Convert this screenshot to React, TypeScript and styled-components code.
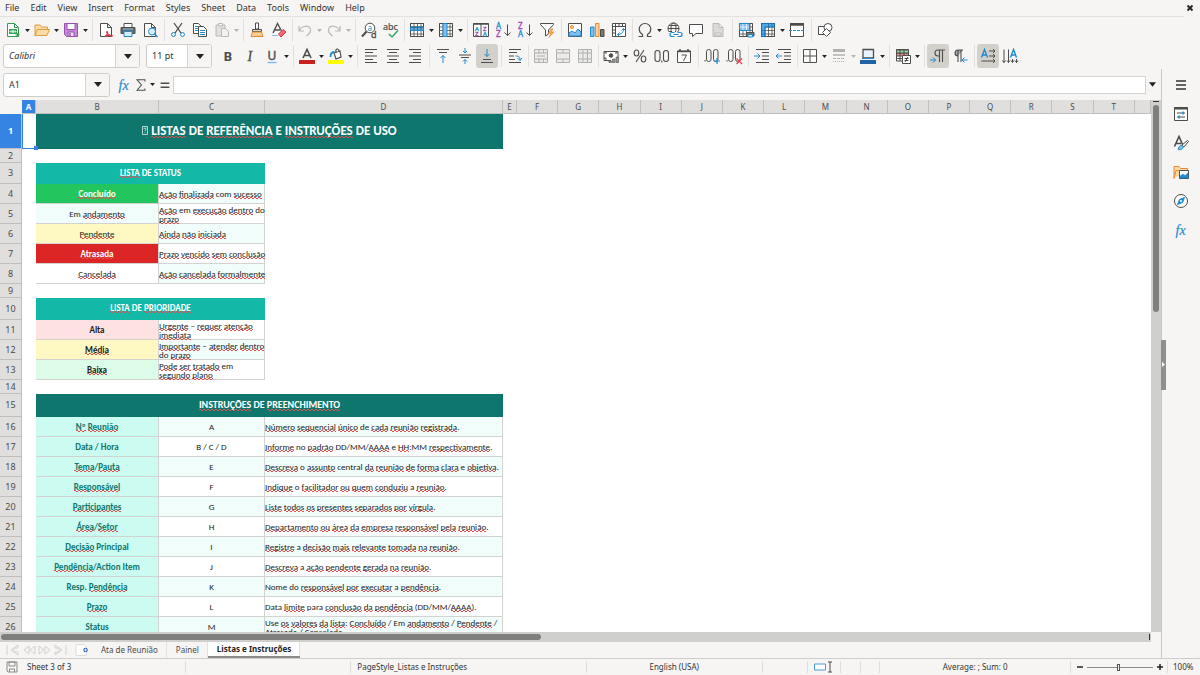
import React from "react";
import styled, { createGlobalStyle, css } from "styled-components";

const ink = "#4d4d4b";
const blue = "#1e8bcd";
const sky = "#83beec";
const line = "#d5d3d1";

const GlobalStyle = createGlobalStyle`
  *, *::before, *::after { box-sizing: border-box; }
  html, body, #root { height: 100%; }
  body { margin: 0; background: #f6f5f4; }
  button, input { font: inherit; color: inherit; }
`;

const Window = styled.div`
  display: flex;
  flex-direction: column;
  height: 100vh;
  overflow: hidden;
  background: #f6f5f4;
  color: #343432;
  font-family: "Noto Sans", sans-serif;
  font-size: 9px;
  line-height: 12px;
`;

const MenuBar = styled.nav`
  display: flex;
  flex: none;
  align-items: center;
  gap: 1px;
  height: 17px;
  margin-right: 16px;
  border-bottom: 1px solid #e3e1df;
`;

const MenuItem = styled.button`
  border: 0;
  background: none;
  padding: 0 5px;
`;

const CloseButton = styled.button`
  display: flex;
  margin-left: auto;
  margin-right: -10px;
  padding: 0;
  border: 0;
  background: none;
`;

const ToolRow = styled.div`
  display: flex;
  flex: none;
  align-items: center;
  height: 26px;
  padding-left: 2px;
`;

const ToolButton = styled.button<{ $active?: boolean; $faded?: boolean }>`
  display: flex;
  flex: none;
  align-items: center;
  justify-content: center;
  width: 22px;
  height: 24px;
  padding: 0;
  border: 0;
  border-radius: 3px;
  background: ${(p) => (p.$active ? "#d3d0cc" : "none")};
  opacity: ${(p) => (p.$faded ? 0.35 : 1)};
`;

const ArrowButton = styled.button<{ $faded?: boolean }>`
  display: flex;
  flex: none;
  align-items: center;
  justify-content: center;
  width: 7px;
  height: 24px;
  padding: 0;
  border: 0;
  background: none;
  opacity: ${(p) => (p.$faded ? 0.3 : 1)};
`;

const Separator = styled.span<{ $narrow?: boolean }>`
  flex: none;
  width: ${(p) => (p.$narrow ? 4 : 6)}px;
  height: 22px;
  background: linear-gradient(#e2e0de, #e2e0de) center / 1px 100% no-repeat;
`;

const Combo = styled.div<{ $width: number }>`
  display: flex;
  flex: none;
  width: ${(p) => p.$width}px;
  height: 24px;
  margin-left: 1px;
  margin-right: 5px;
  border: 1px solid #cfccc9;
  border-radius: 3px;
  background: #fff;
  overflow: hidden;
`;

const ComboInput = styled.input<{ $italic?: boolean }>`
  flex: 1;
  min-width: 0;
  padding: 0 5px;
  border: 0;
  outline: 0;
  background: none;
  font-style: ${(p) => (p.$italic ? "italic" : "normal")};
`;

const ComboButton = styled.button`
  display: flex;
  align-items: center;
  justify-content: center;
  width: 24px;
  padding: 0;
  border: 0;
  border-left: 1px solid #d5d2cf;
  background: #f6f5f4;
`;

const Body = styled.div`
  display: flex;
  flex: 1;
  min-height: 0;
`;

const Workspace = styled.main`
  display: flex;
  flex: 1;
  flex-direction: column;
  min-width: 0;
`;

const FormulaBar = styled.div`
  display: flex;
  flex: none;
  align-items: center;
  height: 31px;
  padding: 0 5px 0 2px;
`;

const FormulaButton = styled(ToolButton)`
  width: 17px;
`;

const FormulaInput = styled.input`
  flex: 1;
  min-width: 0;
  height: 18px;
  margin-right: 3px;
  padding: 0 4px;
  border: 1px solid #d5d3d1;
  outline: 0;
  background: #fff;
`;

const SheetArea = styled.div`
  display: flex;
  flex: 1;
  min-height: 0;
`;

const GridView = styled.div`
  flex: 1;
  min-width: 0;
  overflow: hidden;
  background: #fff;
`;

const Grid = styled.table`
  width: 100%;
  table-layout: fixed;
  border-collapse: separate;
  border-spacing: 0;
`;

const Col = styled.col<{ $width?: number }>`
  width: ${(p) => (p.$width ? `${p.$width}px` : "auto")};
`;

const Row = styled.tr<{ $height: number }>`
  height: ${(p) => p.$height}px;
`;

const Heading = styled.th<{ $selected?: boolean }>`
  padding: 0;
  border-right: 1px solid #c0bfbd;
  border-bottom: 1px solid #c0bfbd;
  background: ${(p) => (p.$selected ? "#3584e4" : "#e1dfde")};
  color: ${(p) => (p.$selected ? "#fff" : "#4b4b49")};
  font-size: 9px;
  line-height: 12px;
  font-weight: ${(p) => (p.$selected ? 700 : 400)};
  text-align: center;
`;

const ColumnHeading = styled(Heading)`
  font-size: 8px;
`;

const Corner = styled.td`
  padding: 0;
  background: #f6f5f4;
`;

const Blank = styled.td`
  padding: 0;
`;

const CursorCell = styled.td`
  position: relative;
  padding: 0;
  border: 1px solid #3584e4;
  border-right: 0;
  border-top: 0;

  &::after {
    content: "";
    position: absolute;
    right: -2px;
    bottom: -2px;
    z-index: 1;
    width: 4px;
    height: 4px;
    background: #3584e4;
  }
`;

const Banner = styled.td<{ $fill: string; $size: number }>`
  padding: 0 0 2px;
  background: ${(p) => p.$fill};
  color: #fff;
  font-family: Carlito, Lato, sans-serif;
  font-size: ${(p) => p.$size}px;
  font-weight: 700;
  line-height: 14px;
  text-align: center;
`;

const Cell = styled.td<{ $fill?: string; $color?: string; $bold?: boolean; $left?: boolean }>`
  padding: 0;
  border-right: 1px solid ${line};
  border-bottom: 1px solid ${line};
  background: ${(p) => p.$fill ?? "#fff"};
  color: ${(p) => p.$color ?? "#1c1c1c"};
  font-family: Carlito, Lato, sans-serif;
  font-size: 9px;
  line-height: 9px;
  font-weight: ${(p) => (p.$bold ? 700 : 400)};
  text-align: ${(p) => (p.$left ? "left" : "center")};
  white-space: pre;
`;

/* Two offset rows of dashes under the baseline form the small spelling wave. */
const Misspelt = styled.span`
  background:
    linear-gradient(90deg, #e0504c 50%, transparent 50%) 0 calc(100% - 1px) / 4px 1px repeat-x,
    linear-gradient(90deg, transparent 50%, #e0504c 50%) 0 100% / 4px 1px repeat-x;
`;

const scrollThumb = css`
  background: #7f807e;
  border-radius: 3px;
`;

const VerticalScroll = styled.div`
  flex: none;
  width: 10px;
  padding: 1px 2px;
  background: #cfcfce;
`;

const VerticalThumb = styled.div`
  ${scrollThumb}
  height: 39%;
  margin-top: 3px;
  width: 6px;
`;

const EndMark = styled.div<{ $upright?: boolean }>`
  width: ${(p) => (p.$upright ? 1 : 6)}px;
  height: ${(p) => (p.$upright ? 6 : 1)}px;
  background: #333;
`;

const HorizontalScroll = styled.div`
  display: flex;
  flex: none;
  align-items: center;
  justify-content: space-between;
  height: 10px;
  margin-right: 10px;
  padding: 0 1px;
  background: #cfcfce;
`;

const HorizontalThumb = styled.div`
  ${scrollThumb}
  width: 47%;
  height: 6px;
`;

const TabBar = styled.div`
  display: flex;
  flex: none;
  height: 16px;
  padding-left: 5px;
  font-size: 8px;
`;

const TabNav = styled.div`
  display: flex;
  align-items: center;
  width: 69px;
`;

const TabNavButton = styled.button`
  display: flex;
  padding: 0;
  border: 0;
  background: none;
`;

const AddSheet = styled.button`
  display: flex;
  align-items: center;
  width: 18px;
  padding: 0 2px;
  border: 0;
  background: none;
`;

const Tab = styled.button<{ $active?: boolean }>`
  padding: 0 9px;
  border: 0;
  border-bottom: ${(p) => (p.$active ? "2px solid #8a8a88" : "0")};
  background: ${(p) => (p.$active ? "#fff" : "none")};
  color: ${(p) => (p.$active ? "#222" : "#4b4b49")};
  font-weight: ${(p) => (p.$active ? 700 : 400)};
  box-shadow: inset -1px 0 #e3e1df;
`;

const Sidebar = styled.aside`
  position: relative;
  display: flex;
  flex: none;
  flex-direction: column;
  align-items: center;
  gap: 5px;
  width: 39px;
  padding-top: 4px;
  border-left: 1px solid #c8c6c4;
`;

const Handle = styled.button`
  position: absolute;
  left: -1px;
  top: 46%;
  display: flex;
  align-items: center;
  width: 5px;
  height: 50px;
  padding: 0;
  border: 0;
  background: #8f8f8d;
`;

const StatusBar = styled.footer`
  display: grid;
  flex: none;
  grid-template-columns: 186fr 166fr 236fr 176fr 46fr 31fr 20fr 19fr 191fr 97px 32px;
  align-items: center;
  height: 17px;
  border-top: 1px solid #cfcdcb;
  font-size: 8px;
`;

const StatusItem = styled.div<{ $center?: boolean }>`
  display: flex;
  align-items: center;
  justify-content: ${(p) => (p.$center ? "center" : "flex-start")};
  gap: 9px;
  height: 12px;
  padding: 0 6px;
  border-right: 1px solid #e0dedc;
  white-space: nowrap;

  &:last-child { border-right: 0; padding: 0 5px; }
`;

const Zoom = styled(StatusItem)`
  gap: 3px;
  padding: 0 5px;
`;

const ZoomButton = styled.button`
  display: flex;
  padding: 0;
  border: 0;
  background: none;
`;

const ZoomSlider = styled.input`
  appearance: none;
  width: 66px;
  height: 10px;
  margin: 0;
  background: linear-gradient(#8d8c8a, #8d8c8a) center / 100% 1px no-repeat;

  &::-webkit-slider-thumb {
    appearance: none;
    width: 3px;
    height: 7px;
    border: 1px solid #555;
    background: #f6f5f4;
  }
`;

const Art = styled.svg`
  display: block;
  flex: none;
  overflow: visible;
  fill: none;
  stroke: ${ink};
  stroke-width: 1;
`;

const serif = { fontFamily: '"Liberation Serif", serif' };
const sans = { fontFamily: '"Noto Sans", sans-serif' };

function Caret({ size = 5 }: { size?: number }) {
  return (
    <Art width={size} height={size === 5 ? 3 : 5} viewBox="0 0 8 5" aria-hidden>
      <path d="M0 0h8L4 5z" fill="#222" stroke="none" />
    </Art>
  );
}

const page = <path d="M2.500 1.500h7l4 4v9h-11zM9.500 1.500v4h4" fill="#fff" />;
const gridLines = <path d="M1.500 1.500h13v13h-13zM1.500 5h13M1.500 8.500h13M1.500 12h13M5 1.500v13M8.500 1.500v13M12 1.500v13" strokeWidth=".8" />;

const icons: Record<string, React.ReactNode> = {
  new: (
    <g stroke="#2f9e4f">
      <path d="M2.500 1.500h7l4 4v9h-11z" fill="#fff" />
      <path d="M9.500 1.500v4h4" />
      <path d="M4.500 7.500h7v4h-7z" fill="#6cc287" />
      <path d="M4.500 9.500h7M8 7.500v4" stroke="#fff" strokeWidth=".6" />
      <path d="M10.500 13h4M12.500 11v4" strokeWidth="1.200" />
    </g>
  ),
  open: <path d="M1 13.500V3h5l1.500 2h6v2.500M1 13.500l2.500-6h12l-2.500 6z" fill="#fbdca8" stroke="#e09b3c" />,
  save: (
    <g stroke="#9a4fb0">
      <path d="M1.500 1.500h13v13h-11l-2-2z" fill="#c58bd6" />
      <path d="M4 1.500h8v6H4z" fill="#fff" />
      <path d="M5 10h6v4.500H5z" fill="#f0e0f5" />
      <path d="M7 11v3" strokeWidth="1.500" />
    </g>
  ),
  pdf: <g>{page}<path d="M7 14.500c3-2 3-5 2-5s0 4 6 4.500c-2-1-5-.5-8 .5z" fill="#fff" stroke="#dc3b45" strokeWidth="1.200" /></g>,
  print: (
    <g>
      <path d="M4 5.500v-4h8v4" fill="#fff" />
      <path d="M1 5.500h14v6H1z" fill="#6a6a68" />
      <path d="M3 7h10" stroke={sky} />
      <path d="M4 9.500h8v5H4z" fill="#d8ecfa" stroke={blue} />
    </g>
  ),
  preview: <g>{page}<circle cx="10" cy="9.500" r="3.500" fill="#d8ecfa" stroke={blue} /><path d="M12.500 12l3 3" stroke={blue} strokeWidth="1.500" /></g>,
  cut: <g><path d="M4 1l7 10M12 1L5 11" strokeWidth="1.300" /><circle cx="3.500" cy="12.500" r="2" stroke={blue} /><circle cx="12.500" cy="12.500" r="2" stroke={blue} /></g>,
  copy: <g><path d="M1.500 1.500h5l3 3v7h-8z" fill="#fff" /><path d="M3 4.500h3M3 6.500h4M3 8.500h4" stroke={blue} /><path d="M6.500 4.500h5l3 3v7h-8z" fill="#fff" /><path d="M8 8.500h5M8 10.500h5M8 12.500h5" stroke={blue} /></g>,
  paste: <g><path d="M2 3h9v11H2z" fill="#bbb" /><path d="M4.500 1.500h4V4h-4z" fill="#eee" /><path d="M7.500 6.500h4l3 3v5h-7z" fill="#eee" /></g>,
  brush: <g><path d="M6.500 1h3v6h-3z" fill="#fff" /><path d="M3.500 7.500h9v2h-9z" fill="#ddd" /><path d="M3.500 10h9l1.500 4.500H2z" fill="#fbd09a" stroke="#e38a32" /><path d="M5 14.500h8" stroke="#e38a32" /></g>,
  clear: <g><path d="M2 11L6.500 1.500 11 10M4 8h5" strokeWidth="1.400" /><path d="M1 13.500h6" stroke={sky} /><path d="M7.500 12l4.500-4.500 3 2.500-5 5z" fill="#ef6c74" stroke="#cf3a45" /></g>,
  undo: <path d="M2 4v5h5M2.500 8.500c2-5 10-6 11-1 .5 3-2 5-4 6.500" strokeWidth="1.200" />,
  redo: <path d="M14 4v5H9M13.500 8.500c-2-5-10-6-11-1-.5 3 2 5 4 6.500" strokeWidth="1.200" />,
  find: <g><circle cx="9" cy="6" r="4.800" fill="#fff" /><path d="M5.500 9.500L1 14.500" strokeWidth="2" /><text x="6.500" y="9" fontSize="8" fill={blue} stroke="none" style={sans}>a</text><text x="10" y="15.500" fontSize="9" fill={ink} stroke={ink} strokeWidth=".3" style={sans}>d</text></g>,
  spell: <g><text x="0" y="8" fontSize="9" fill={ink} stroke={ink} strokeWidth=".2" style={sans}>abc</text><path d="M6 12l3 3 6-6.500" stroke="#2fa866" strokeWidth="1.500" /></g>,
  rows: <g><path d="M1.500 1.500h13v13h-13z" fill="#fff" /><path d="M1.500 5h13v3.500h-13z" fill="#5aaee6" />{gridLines}<path d="M1.500 5h13v3.500h-13z" stroke={blue} /></g>,
  cols: <g><path d="M1.500 1.500h13v13h-13z" fill="#fff" />{gridLines}<path d="M5 1.500h4v13H5z" fill={sky} stroke={blue} /></g>,
  sort: <g><path d="M.5 1.500h15v13H.5zM8 1.500v13" fill="#fff" /><path d="M.5 2h15" strokeWidth="1.500" /><text x="2" y="8.500" fontSize="6" fill={blue} stroke={blue} strokeWidth=".3" style={sans}>A</text><text x="2" y="14" fontSize="6" fill="#a345b8" stroke="#a345b8" strokeWidth=".3" style={sans}>Z</text><text x="10" y="8.500" fontSize="6" fill="#a345b8" stroke="#a345b8" strokeWidth=".3" style={sans}>Z</text><text x="10" y="14" fontSize="6" fill={blue} stroke={blue} strokeWidth=".3" style={sans}>A</text></g>,
  az: <g><text x="1" y="7" fontSize="8" fill={blue} stroke={blue} strokeWidth=".3" style={sans}>A</text><text x="1" y="15" fontSize="8" fill="#a345b8" stroke="#a345b8" strokeWidth=".3" style={sans}>Z</text><path d="M12.500 2.500v11M9.500 10.500l3 3 3-3" /></g>,
  za: <g><text x="1" y="7" fontSize="8" fill="#a345b8" stroke="#a345b8" strokeWidth=".3" style={sans}>Z</text><text x="1" y="15" fontSize="8" fill={blue} stroke={blue} strokeWidth=".3" style={sans}>A</text><path d="M12.500 2.500v11M9.500 10.500l3 3 3-3" /></g>,
  filter: <g><path d="M1.500 1.500h13v1L9.500 8v4l-3 2V8l-5-5.500z" fill="#fff" /><path d="M12 7l-3 4.500h3l-2 4 5-5.500h-3l2-3z" fill="#f5a94d" stroke="#e38a32" strokeWidth=".6" /></g>,
  image: <g><path d="M1.500 1.500h13v13h-13z" fill="#fff" /><circle cx="5" cy="5" r="1.500" fill="#fbd09a" stroke="#e38a32" /><path d="M2 14v-3l3-2 3 2 3-4 3 3v4z" fill={sky} stroke={blue} /></g>,
  chart: <g><path d="M1.500 5h3.500v9.500H1.500z" fill={sky} stroke={blue} /><path d="M6.500 1.500H10v13H6.500z" fill="#fbd09a" stroke="#e38a32" /><path d="M11.500 7.500H15v7h-3.500z" fill="#777" /></g>,
  pivot: <g><path d="M1.500 1.500h13v13h-13zM1.500 4.500h13M4.500 1.500v13M8 1.500v3M11.500 1.500v3M1.500 8h3M1.500 11h3" fill="#fff" /><path d="M6.500 12.500c4 0 6-2 6-5.500M10.500 8.500L12.500 6.500l2 2M8.500 10.500l-2 2 2 2" stroke={blue} /></g>,
  omega: <path d="M1.500 14.500h4v-2C3 11 2.200 9 2.200 7a5.800 5.500 0 0 1 11.600 0c0 2-.8 4-3.300 5.500v2h4" strokeWidth="1.200" />,
  link: <g><circle cx="7.500" cy="6.500" r="5.500" /><ellipse cx="7.500" cy="6.500" rx="2.500" ry="5.500" /><path d="M2 6.500h11M3 3.500h9M3 9.500h3" /><rect x="3" y="10" width="13" height="5.500" fill="#f6f5f4" stroke="none" /><path d="M8.500 10.500H6a2 2 0 0 0 0 4h2.500M11.500 10.500H14a2 2 0 0 1 0 4h-2.500M7.500 12.500h5" stroke={blue} strokeWidth="1.200" /></g>,
  comment: <path d="M1.500 2.500h13v9H8l-3.500 3v-3h-3z" fill="#fff" />,
  header: <g opacity=".35"><path d="M3 1.500h6l4 4v9H3zM9 1.500v4h4" fill="#aaa" /><path d="M5 11h6v2H5z" fill="#fff" /></g>,
  printarea: <g><path d="M1.500 1.500h13v13h-13z" fill="#fff" />{gridLines}<path d="M1.500 1.500h10v7h-10z" fill={sky} stroke={blue} /><path d="M2 5h9M5 2v6M8.500 2v6" stroke="#fff" strokeWidth=".7" /><path d="M8.500 10.500H16v3.500H8.500z" fill="#777" /><path d="M10 12.500h4.500v2.500H10z" fill="#d8ecfa" stroke={blue} /></g>,
  freeze: <g><path d="M1.500 1.500h13v13h-13z" fill="#fff" />{gridLines}<path d="M1.500 1.500h13V5H5v9.500H1.500z" fill="#4fa6e0" stroke="#1c6fb0" /><path d="M8.500 2v3M12 2v3M2 8.500h3M2 12h3" stroke="#1c6fb0" strokeWidth=".8" /></g>,
  split: <g><path d="M1.500 1.500h13v13h-13z" fill="#fff" /><path d="M1 2.500h14" strokeWidth="2.500" /><path d="M0 8.500h16" stroke={blue} strokeDasharray="3 1" /></g>,
  shapes: <g><path d="M1.500 4.500h7v8h-7z" fill="#fff" /><circle cx="11" cy="5.500" r="4" fill="#fff" /><path d="M9.500 6.500l4 4-4 4-4-4z" fill="#fff" /></g>,
  bold: <text x="3.500" y="13" fontSize="13" fontWeight="700" fill={ink} stroke="none" style={sans}>B</text>,
  italic: <text x="5.500" y="13" fontSize="14" fontStyle="italic" fill={ink} stroke={ink} strokeWidth=".3" style={serif}>I</text>,
  underline: <g><text x="3.500" y="12" fontSize="12" fill={ink} stroke={ink} strokeWidth=".4" style={sans}>U</text><path d="M3.500 14.500h9" stroke={sky} strokeWidth="1.500" /></g>,
  fontcolor: <g><path d="M4 10L8 1.500l4 8.500M5.500 7.500h5" strokeWidth="1.600" /><path d="M0 14h16" stroke="#c9211e" strokeWidth="4" /></g>,
  highlight: <g><path d="M6 5l6-2 1 6-5 2zM8 4c-1-4 3-4 3 0" fill="#fff" strokeWidth="1.200" /><path d="M2.500 9c0-4 2-5 4-5" stroke={blue} strokeWidth="1.800" /><path d="M0 14h16" stroke="#ffff00" strokeWidth="4" /></g>,
  left: <path d="M2 1.500h12M2 4.500h8M2 8h12M2 11.500h8M2 14.500h12" />,
  center: <path d="M2 1.500h12M4 4.500h8M2 8h12M4 11.500h8M2 14.500h12" />,
  right: <path d="M2 1.500h12M6 4.500h8M2 8h12M6 11.500h8M2 14.500h12" />,
  vtop: <g><path d="M2 1.500h12M4 4.500h8" /><path d="M8 15V7.500M5.500 10L8 7.500 10.500 10" stroke={blue} /></g>,
  vmiddle: <g><path d="M2 7h12M4 9.500h8" /><path d="M8 0v5M6 3l2 2 2-2M8 16v-4.500M6 13.500l2-2 2 2" stroke={blue} /></g>,
  vbottom: <g><path d="M2 14.500h12M4 11.500h8" /><path d="M8 1v7.500M5.500 6L8 8.500 10.500 6" stroke={blue} /></g>,
  wrap: <g><path d="M2 1.500h12M2 4.500h8M2 8h5M2 11.500h6M2 14.500h12" /><path d="M8.500 8c4 0 4.500 1 4.500 4.500M10.500 10l2.500 2.500 2-2.500" stroke={blue} /></g>,
  merge: <g opacity=".4"><path d="M1.500 1.500h13v13h-13zM1.500 5h13M1.500 11h13M6 1.500v3.500M10.500 1.500v3.500M6 11v3.500M10.500 11v3.500" fill="#ddd" /><path d="M4 8h8" /></g>,
  mergecenter: <g opacity=".4"><path d="M1.500 1.500h13v13h-13zM1.500 5h13M1.500 11h13M8 1.500v3.500M8 11v3.500" fill="#ddd" /></g>,
  unmerge: <g opacity=".4"><path d="M1.500 1.500h13v13h-13zM1.500 5h13M1.500 11h13M6 1.500v13M10.500 1.500v13" fill="#ddd" /></g>,
  currency: <g><path d="M8 12.500H1v-9h14v6" fill="#fff" /><path d="M1 4h2v2M15 4h-2v2M3 12v-2H1" /><circle cx="8" cy="7.500" r="1.800" fill={ink} /><path d="M13 9h2.500v5.500H13zM9.500 11H12v3.500H9.500zM6 13h2.500v1.500H6z" fill="#999" strokeWidth=".6" /></g>,
  percent: <g strokeWidth="1.100"><ellipse cx="4.500" cy="5" rx="2.300" ry="3" /><ellipse cx="11.500" cy="11" rx="2.300" ry="3" /><path d="M12 2L4 14" /></g>,
  number: <g strokeWidth="1.100"><rect x="1" y="2.500" width="5" height="11" rx="2.500" /><rect x="9.500" y="2.500" width="5" height="11" rx="2.500" /><path d="M7.800 12.500v2" /></g>,
  date: <g><path d="M1.500 3h13v11.500h-13z" fill="#fff" /><path d="M1.500 3.500h13" strokeWidth="1.500" /><path d="M4 1v3M12 1v3" strokeWidth="1.500" /><path d="M5.500 7h5l-3 6" /></g>,
  adddecimal: <g><path d="M1 12v1.500" /><rect x="2.500" y="1.500" width="4.500" height="12" rx="2.200" /><rect x="9.500" y="1.500" width="4.500" height="12" rx="2.200" /><path d="M10 13h6M13 10v6" stroke={blue} strokeWidth="1.200" /></g>,
  deldecimal: <g><path d="M1 12v1.500" /><rect x="2.500" y="1.500" width="4.500" height="12" rx="2.200" /><rect x="9.500" y="1.500" width="4.500" height="12" rx="2.200" /><path d="M10.500 10.500L16 16M16 10.500L10.500 16" stroke="#e0444a" strokeWidth="1.200" /></g>,
  indent: <g><path d="M2 1.500h13M8 4.500h7M8 8h7M8 11.500h7M2 14.500h13" /><path d="M0 8h6M3.500 5.500L6 8l-2.500 2.500" stroke={blue} /></g>,
  outdent: <g><path d="M2 1.500h13M8 4.500h7M8 8h7M8 11.500h7M2 14.500h13" /><path d="M6 8H0M2.500 5.500L0 8l2.500 2.500" stroke={blue} /></g>,
  border: <path d="M1.500 1.500h13v13h-13zM8 1.500v13M1.500 8h13" fill="#fff" />,
  linestyle: <g opacity=".4"><path d="M2 2.500h12" strokeWidth="3" /><path d="M2 7h12" strokeWidth="1.500" /><path d="M2 10.500h12" strokeDasharray="3 1" /><path d="M2 13.500h12" strokeDasharray="1 1" /></g>,
  bordercolor: <g><path d="M3 1.500h10.500v8.500H3z" fill="#e8f3fc" strokeWidth="1.300" /><path d="M2 10.500h12" stroke={blue} /><path d="M0 14h16" stroke="#2363a5" strokeWidth="4" /></g>,
  conditional: <g><path d="M1.500 1.500h12V13h-12z" fill="#fff" /><path d="M1.500 5h12V8h-12z" fill="#ef8a8a" /><path d="M1.500 2h12v3h-12z" fill="#93d3a4" /><path d="M5 1.500V13M9 1.500v6M1.500 10.500h6" /><path d="M7.500 7.500h8v8h-8z" fill="#fff" /><path d="M9.500 10.500h4M9.500 12.500h4M13 9l-3 5" /></g>,
  ltr: <g><path d="M15 2H8c-4 0-4 6 0 6h1M9.500 2v12M12.500 2v12" strokeWidth="1.100" /><path d="M0 12h5.500M3 9.500L5.500 12 3 14.500" stroke={blue} /></g>,
  rtl: <g><path d="M11 2H6C2 2 2 8 6 8z" fill="#aaa" stroke="none" /><path d="M11 2H6C2 2 2 8 6 8M6 2v12M9 2v12" strokeWidth="1.100" /><path d="M15.500 12H10M12.500 9.500L10 12l2.500 2.500" stroke={blue} /></g>,
  horizontal: <g><path d="M1.500 9.500L4.500 1.500l3 8M2.500 7h4" stroke={blue} strokeWidth="1.400" /><path d="M9 3h6M9 8h6M1.500 13h13.500M13 1l2 2-2 2M13 6l2 2-2 2M13 11l2 2-2 2" /></g>,
  vertical: <g><path d="M8.500 9.500l3-8 3 8M9.500 7h4" stroke={blue} strokeWidth="1.400" /><path d="M2 1.500v13M6.500 1.500v13M10.500 11v3.500M14.500 11v3.500M.5 12.500l1.500 2 1.500-2M5 12.500l1.500 2 1.500-2M9 12.500l1.500 2 1.500-2M13 12.500l1.500 2 1.500-2" /></g>,
  fx: <text x="2.500" y="12.500" fontSize="14" fontStyle="italic" fill={blue} stroke={blue} strokeWidth=".2" style={serif}>fx</text>,
  sum: <path d="M12.500 4V2h-9l5 6-5 6h9v-2" strokeWidth="1.200" />,
  equals: <path d="M3 6h10M3 10.500h10" strokeWidth="1.600" />,
  menu: <path d="M3 4h10M3 8h10M3 12h10" stroke="#333" strokeWidth="1.500" />,
  properties: <g><path d="M1.500 1.500h13v13h-13z" fill="#fff" /><path d="M1 2.500h14" strokeWidth="2" /><path d="M4 7h8M4 11h8" /><path d="M10 5.500v3M6 9.500v3" stroke={blue} strokeWidth="1.500" /></g>,
  styles: <g><path d="M1.500 11.500L6 1.500l3.500 8M3 8.500h5" strokeWidth="1.600" /><path d="M9 10l5.500-4.500 1 1L11 12z" fill="#fff" /><path d="M5 14.500c1-4 3-5 5.500-3-1 3-3 3.500-5.500 3z" fill={sky} stroke={blue} /></g>,
  gallery: <g><path d="M1 14.500v-12h5l1.500 2h7v3M1 14.500l2-8h3" fill="#fbdca8" stroke="#e38a32" /><path d="M6.500 6.500h9v8h-9z" fill="#fff" /><path d="M7 14v-2l3-2 2 1.500 3-2.500v5z" fill={blue} stroke={blue} strokeWidth=".5" /></g>,
  navigator: <g><circle cx="8" cy="8" r="6.500" fill="#fff" /><path d="M11.500 4.500L9.500 9.500l-5 2 2-5z" fill={blue} stroke={blue} /><circle cx="8" cy="8" r="1" fill="#fff" stroke="none" /></g>,
};

function Icon({ name, size = 16 }: { name: string; size?: number }) {
  return (
    <Art width={size} height={size} viewBox="0 0 16 16" aria-hidden>
      {icons[name]}
    </Art>
  );
}

type Tool = { icon: string; label: string; arrow?: boolean; active?: boolean; faded?: boolean } | "|" | "·";

const standardTools: Tool[] = [
  { icon: "new", label: "New", arrow: true },
  { icon: "open", label: "Open", arrow: true },
  { icon: "save", label: "Save", arrow: true },
  "|",
  { icon: "pdf", label: "Export as PDF" },
  { icon: "print", label: "Print" },
  { icon: "preview", label: "Print Preview" },
  "|",
  { icon: "cut", label: "Cut" },
  { icon: "copy", label: "Copy" },
  { icon: "paste", label: "Paste", arrow: true, faded: true },
  "|",
  { icon: "brush", label: "Clone Formatting" },
  { icon: "clear", label: "Clear Formatting" },
  "·",
  { icon: "undo", label: "Undo", arrow: true, faded: true },
  { icon: "redo", label: "Redo", arrow: true, faded: true },
  "|",
  { icon: "find", label: "Find and Replace" },
  { icon: "spell", label: "Spelling" },
  "·",
  { icon: "rows", label: "Row", arrow: true },
  { icon: "cols", label: "Column", arrow: true },
  "|",
  { icon: "sort", label: "Sort" },
  { icon: "az", label: "Sort Ascending" },
  { icon: "za", label: "Sort Descending" },
  { icon: "filter", label: "AutoFilter" },
  "|",
  { icon: "image", label: "Insert Image" },
  { icon: "chart", label: "Insert Chart" },
  { icon: "pivot", label: "Pivot Table" },
  "·",
  { icon: "omega", label: "Special Character", arrow: true },
  { icon: "link", label: "Hyperlink" },
  { icon: "comment", label: "Comment" },
  { icon: "header", label: "Headers and Footers" },
  "|",
  { icon: "printarea", label: "Define Print Area" },
  { icon: "freeze", label: "Freeze", arrow: true },
  { icon: "split", label: "Split Window" },
  "|",
  { icon: "shapes", label: "Draw Functions" },
];

const formatTools: Tool[] = [
  { icon: "bold", label: "Bold" },
  { icon: "italic", label: "Italic" },
  { icon: "underline", label: "Underline", arrow: true },
  "|",
  { icon: "fontcolor", label: "Font Color", arrow: true },
  { icon: "highlight", label: "Background Color", arrow: true },
  "|",
  { icon: "left", label: "Align Left" },
  { icon: "center", label: "Center" },
  { icon: "right", label: "Align Right" },
  "|",
  { icon: "vtop", label: "Align Top" },
  { icon: "vmiddle", label: "Center Vertically" },
  { icon: "vbottom", label: "Align Bottom", active: true },
  "|",
  { icon: "wrap", label: "Wrap Text" },
  "·",
  { icon: "merge", label: "Merge and Center" },
  { icon: "mergecenter", label: "Merge" },
  { icon: "unmerge", label: "Unmerge" },
  "·",
  { icon: "currency", label: "Currency", arrow: true },
  { icon: "percent", label: "Percent" },
  { icon: "number", label: "Number" },
  { icon: "date", label: "Date" },
  "|",
  { icon: "adddecimal", label: "Add Decimal Place" },
  { icon: "deldecimal", label: "Delete Decimal Place" },
  "|",
  { icon: "indent", label: "Increase Indent" },
  { icon: "outdent", label: "Decrease Indent" },
  "·",
  { icon: "border", label: "Borders", arrow: true },
  { icon: "linestyle", label: "Border Style", arrow: true },
  { icon: "bordercolor", label: "Border Color", arrow: true },
  "|",
  { icon: "conditional", label: "Conditional", arrow: true },
  "|",
  { icon: "ltr", label: "Left-To-Right", active: true },
  { icon: "rtl", label: "Right-To-Left" },
  "|",
  { icon: "horizontal", label: "Text Left to Right", active: true },
  { icon: "vertical", label: "Text Top to Bottom" },
];

function Tools({ items }: { items: Tool[] }) {
  return (
    <>
      {items.map((t, i) =>
        typeof t === "string" ? (
          <Separator key={i} $narrow={t === "·"} />
        ) : (
          <React.Fragment key={i}>
            <ToolButton aria-label={t.label} $active={t.active} $faded={t.faded}>
              <Icon name={t.icon} />
            </ToolButton>
            {t.arrow && (
              <ArrowButton aria-label={`${t.label} options`} $faded={t.faded || t.icon === "linestyle"}>
                <Caret />
              </ArrowButton>
            )}
          </React.Fragment>
        ),
      )}
    </>
  );
}

function ComboBox({ label, value, width, italic }: { label: string; value: string; width: number; italic?: boolean }) {
  return (
    <Combo $width={width}>
      <ComboInput aria-label={label} defaultValue={value} $italic={italic} />
      <ComboButton aria-label={`${label} list`}>
        <Caret size={8} />
      </ComboButton>
    </Combo>
  );
}

/* Words in square brackets carry the spell checker's red wave. */
function Spelled({ text }: { text: string }) {
  return (
    <>
      {text.split(/\[(.+?)\]/).map((part, i) => (i % 2 ? <Misspelt key={i}>{part}</Misspelt> : part))}
    </>
  );
}

function MissingGlyph() {
  return (
    <svg width="6" height="9" viewBox="0 0 6 9" fill="none" stroke="#fff" strokeWidth=".7" aria-hidden>
      <path d="M.5.5h5v8h-5zM2 3c0-1.500 2-1.500 2 0 0 1-1 1-1 2.200M3 6.300v.8" />
    </svg>
  );
}

const mint = "#f0fdfa";

type Line = { text: string; fill: string; color?: string; bold?: boolean; note: string; noteFill: string };

const statuses: Line[] = [
  { text: "[Concluído]", fill: "#22c55e", color: "#fff", bold: true, note: "[Ação] [finalizada] com [sucesso]", noteFill: mint },
  { text: "Em [andamento]", fill: mint, note: "[Ação] em [execução] [dentro] do\n[prazo]", noteFill: "#fff" },
  { text: "[Pendente]", fill: "#fef9c3", note: "[Ainda] [não] [iniciada]", noteFill: mint },
  { text: "[Atrasada]", fill: "#dc2626", color: "#fff", bold: true, note: "[Prazo] [vencido] [sem] [conclusão]", noteFill: "#fff" },
  { text: "[Cancelada]", fill: "#fff", note: "[Ação] [cancelada] [formalmente]", noteFill: mint },
];

const priorities: Line[] = [
  { text: "Alta", fill: "#fee2e2", bold: true, note: "[Urgente] – [requer] [atenção]\n[imediata]", noteFill: "#fff" },
  { text: "[Média]", fill: "#fef9c3", bold: true, note: "[Importante] – [atender] [dentro]\ndo [prazo]", noteFill: mint },
  { text: "[Baixa]", fill: "#dcfce7", bold: true, note: "[Pode] [ser] [tratado] em\n[segundo] [plano]", noteFill: "#fff" },
];

const instructions: [string, string, string][] = [
  ["[Nº] [Reunião]", "A", "[Número] [sequencial] [único] de [cada] [reunião] [registrada]."],
  ["Data / Hora", "B / C / D", "[Informe] no [padrão] DD/MM/[AAAA] e [HH]:MM [respectivamente]."],
  ["[Tema]/[Pauta]", "E", "[Descreva] o [assunto] central [da] [reunião] [de] [forma] [clara] e [objetiva]."],
  ["[Responsável]", "F", "[Indique] o [facilitador] [ou] [quem] [conduziu] a [reunião]."],
  ["[Participantes]", "G", "[Liste] [todos] [os] [presentes] [separados] [por] [vírgula]."],
  ["[Área]/[Setor]", "H", "[Departamento] [ou] [área] [da] [empresa] [responsável] [pela] [reunião]."],
  ["[Decisão] Principal", "I", "[Registre] a [decisão] [mais] [relevante] [tomada] [na] [reunião]."],
  ["[Pendência]/Action Item", "J", "[Descreva] a [ação] [pendente] [gerada] [na] [reunião]."],
  ["Resp. [Pendência]", "K", "Nome do [responsável] [por] [executar] a [pendência]."],
  ["[Prazo]", "L", "Data [limite] para [conclusão] [da] [pendência] (DD/MM/[AAAA])."],
  ["Status", "M", "Use [os] [valores] [da] [lista]: [Concluído] / Em [andamento] / [Pendente] /\n[Atrasada] / [Cancelada]"],
];

const letters = "ABCDEFGHIJKLMNOPQRST".split("");

function ListRows({ first, lines }: { first: number; lines: Line[] }) {
  return (
    <>
      {lines.map((l, i) => (
        <Row key={l.text} $height={20}>
          <Heading scope="row">{first + i}</Heading>
          <Blank />
          <Cell $fill={l.fill} $color={l.color} $bold={l.bold}><Spelled text={l.text} /></Cell>
          <Cell $fill={l.noteFill} $left><Spelled text={l.note} /></Cell>
        </Row>
      ))}
    </>
  );
}

function BannerRow({ row, height, span, fill, text }: { row: number; height: number; span: number; fill: string; text: string }) {
  return (
    <Row $height={height}>
      <Heading scope="row">{row}</Heading>
      <Blank />
      <Banner colSpan={span} $fill={fill} $size={span === 3 ? 10 : 9}><Spelled text={text} /></Banner>
    </Row>
  );
}

function EmptyRow({ row }: { row: number }) {
  return (
    <Row $height={14}>
      <Heading scope="row">{row}</Heading>
      <Blank />
    </Row>
  );
}

function Sheet() {
  return (
    <Grid>
      <colgroup>
        {[22, 14, 123, 106, 238, 14].map((w, i) => <Col key={i} $width={w} />)}
        {letters.slice(5).map((l) => <Col key={l} />)}
        <Col $width={16} />
      </colgroup>
      <thead>
        <Row $height={14}>
          <Corner />
          {letters.map((l) => <ColumnHeading key={l} scope="col" $selected={l === "A"}>{l}</ColumnHeading>)}
          <ColumnHeading />
        </Row>
      </thead>
      <tbody>
        <Row $height={35}>
          <Heading scope="row" $selected>1</Heading>
          <CursorCell />
          <Banner colSpan={3} $fill="#0f766e" $size={13}>
            <MissingGlyph /> <Spelled text="[LISTAS] DE [REFERÊNCIA] E [INSTRUÇÕES] DE USO" />
          </Banner>
        </Row>
        <EmptyRow row={2} />
        <BannerRow row={3} height={21} span={2} fill="#14b8a6" text="[LISTA] DE STATUS" />
        <ListRows first={4} lines={statuses} />
        <EmptyRow row={9} />
        <BannerRow row={10} height={22} span={2} fill="#14b8a6" text="[LISTA] DE [PRIORIDADE]" />
        <ListRows first={11} lines={priorities} />
        <EmptyRow row={14} />
        <BannerRow row={15} height={23} span={3} fill="#0f766e" text="[INSTRUÇÕES] DE [PREENCHIMENTO]" />
        {instructions.map(([name, column, help], i) => (
          <Row key={name} $height={20}>
            <Heading scope="row">{16 + i}</Heading>
            <Blank />
            <Cell $fill="#ccfbf1" $color="#0f766e" $bold><Spelled text={name} /></Cell>
            <Cell $fill={i % 2 ? "#fff" : mint}>{column}</Cell>
            <Cell $fill={i % 2 ? "#fff" : mint} $left><Spelled text={help} /></Cell>
          </Row>
        ))}
      </tbody>
    </Grid>
  );
}

const navShapes = [
  ["First sheet", "M2 1v10M13 1L6 6l7 5V8H9V4h4z"],
  ["Previous sheet", "M8 2L3 6l5 4zM14 2L9 6l5 4z"],
  ["Next sheet", "M2 2l5 4-5 4zM8 2l5 4-5 4z"],
  ["Last sheet", "M13 1v10M2 1l7 5-7 5V8h4V4H2z"],
];

const sidebarDecks = [
  ["menu", "Sidebar Settings"],
  ["properties", "Properties"],
  ["styles", "Styles"],
  ["gallery", "Gallery"],
  ["navigator", "Navigator"],
  ["fx", "Functions"],
];

export default function App() {
  return (
    <Window>
      <GlobalStyle />
      <MenuBar aria-label="Menu">
        {["File", "Edit", "View", "Insert", "Format", "Styles", "Sheet", "Data", "Tools", "Window", "Help"].map((m) => (
          <MenuItem key={m}>{m}</MenuItem>
        ))}
        <CloseButton aria-label="Close document">
          <Art width="8" height="8" viewBox="0 0 8 8"><path d="M1.500 1.500l5 5M6.500 1.500l-5 5" stroke="#222" strokeWidth="1.800" /></Art>
        </CloseButton>
      </MenuBar>
      <ToolRow role="toolbar" aria-label="Standard">
        <Tools items={standardTools} />
      </ToolRow>
      <ToolRow role="toolbar" aria-label="Formatting">
        <ComboBox label="Font Name" value="Calibri" width={137} italic />
        <ComboBox label="Font Size" value="11 pt" width={66} />
        <Tools items={formatTools} />
      </ToolRow>
      <Body>
        <Workspace>
          <FormulaBar>
            <ComboBox label="Name Box" value="A1" width={107} />
            <FormulaButton aria-label="Function Wizard"><Icon name="fx" /></FormulaButton>
            <FormulaButton aria-label="Select Function"><Icon name="sum" size={14} /></FormulaButton>
            <ArrowButton aria-label="Select Function options"><Caret /></ArrowButton>
            <FormulaButton aria-label="Formula"><Icon name="equals" size={14} /></FormulaButton>
            <FormulaInput aria-label="Input line" />
            <ArrowButton aria-label="Expand Formula Bar"><Caret size={7} /></ArrowButton>
          </FormulaBar>
          <SheetArea>
            <GridView><Sheet /></GridView>
            <VerticalScroll><EndMark /><VerticalThumb /></VerticalScroll>
          </SheetArea>
          <HorizontalScroll><HorizontalThumb /><EndMark $upright /></HorizontalScroll>
          <TabBar>
            <TabNav>
              {navShapes.map(([label, d]) => (
                <TabNavButton key={label} aria-label={label}>
                  <Art width="16" height="12" viewBox="0 0 16 12"><path d={d} stroke="#d3d1cf" /></Art>
                </TabNavButton>
              ))}
            </TabNav>
            <AddSheet aria-label="Add Sheet">
              <Art width="14" height="12" viewBox="0 0 14 12">
                <path d="M0 .5h8l2.500 2.500v8.500H0z" fill="#fff" stroke="#ddd" />
                <circle cx="9.500" cy="6" r="2.200" fill="#2a5db0" stroke="none" />
                <path d="M9.500 4.500v3M8 6h3" stroke="#fff" strokeWidth=".8" />
              </Art>
            </AddSheet>
            <Tab>Ata de Reunião</Tab>
            <Tab>Painel</Tab>
            <Tab $active>Listas e Instruções</Tab>
          </TabBar>
        </Workspace>
        <Sidebar>
          {sidebarDecks.map(([icon, label]) => (
            <ToolButton key={icon} aria-label={label}><Icon name={icon} /></ToolButton>
          ))}
          <Handle aria-label="Hide Sidebar">
            <Art width="4" height="5" viewBox="0 0 4 5"><path d="M1 0l3 2.500L1 5z" fill="#fff" stroke="none" /></Art>
          </Handle>
        </Sidebar>
      </Body>
      <StatusBar>
        <StatusItem>
          <Art width="12" height="12" viewBox="0 0 12 12"><path d="M1 1h10v10H2l-1-1zM3 1h6v4H3zM3.500 11V8h5v3" stroke="#8a8a88" /></Art>
          Sheet 3 of 3
        </StatusItem>
        <StatusItem />
        <StatusItem>PageStyle_Listas e Instruções</StatusItem>
        <StatusItem $center>English (USA)</StatusItem>
        <StatusItem />
        <StatusItem>
          <Art width="20" height="12" viewBox="0 0 20 12">
            <path d="M.5 3h11v6H.5z" fill="#fff" stroke="#4d9ad0" />
            <path d="M14 1h4M16 1v10M14 11h4" />
          </Art>
        </StatusItem>
        <StatusItem />
        <StatusItem />
        <StatusItem $center>Average: ; Sum: 0</StatusItem>
        <Zoom>
          <ZoomButton aria-label="Zoom Out"><Art width="8" height="8" viewBox="0 0 8 8"><path d="M1 4h6" stroke="#222" strokeWidth="1.500" /></Art></ZoomButton>
          <ZoomSlider type="range" aria-label="Zoom" min={0} max={100} defaultValue={48} />
          <ZoomButton aria-label="Zoom In"><Art width="8" height="8" viewBox="0 0 8 8"><path d="M1 4h6M4 1v6" stroke="#222" strokeWidth="1.500" /></Art></ZoomButton>
        </Zoom>
        <StatusItem>100%</StatusItem>
      </StatusBar>
    </Window>
  );
}
